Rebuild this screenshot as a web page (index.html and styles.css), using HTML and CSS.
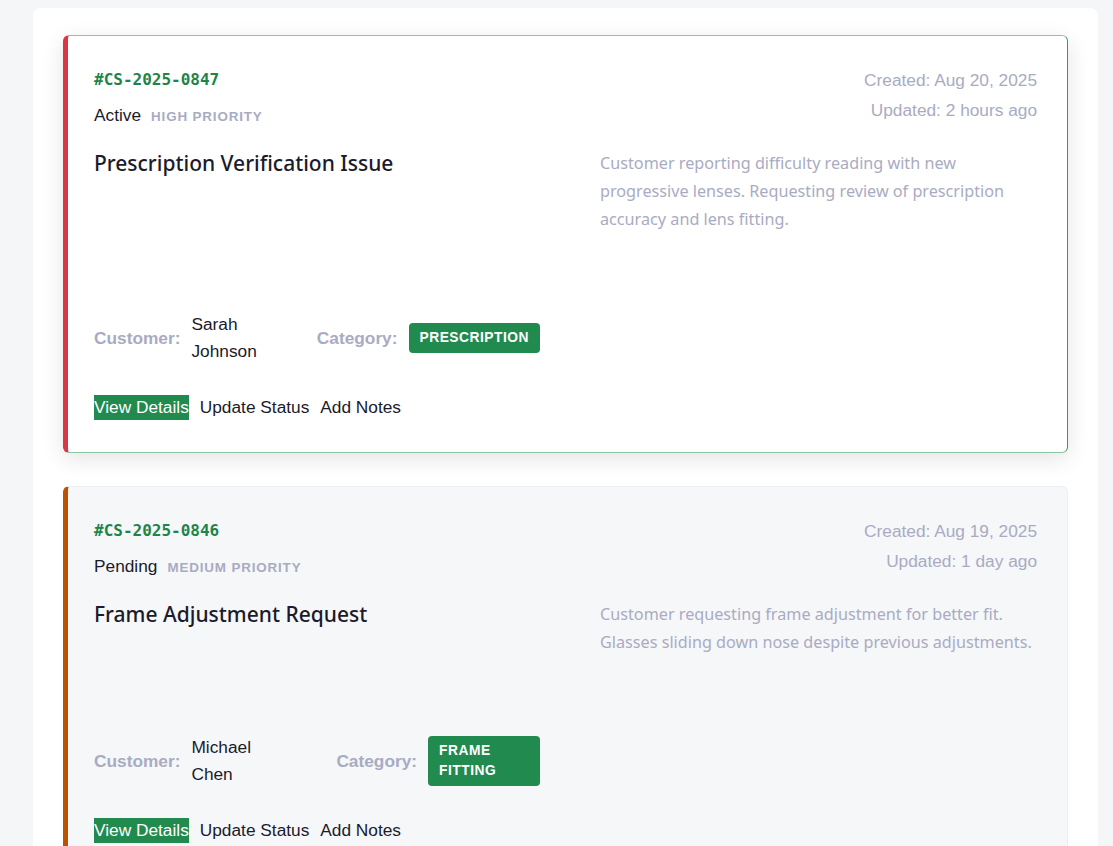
FILE: index.html
```html
<!DOCTYPE html>
<html lang="en">
<head>
<meta charset="utf-8">
<title>Cases</title>
<link rel="stylesheet" href="styles.css">
</head>
<body>
<div class="panel">
  <article class="case case-active">
    <header class="case-head">
      <div class="case-id-block">
        <div class="case-id">#CS-2025-0847</div>
        <div class="case-status"><span class="status">Active</span><span class="priority">High Priority</span></div>
      </div>
      <div class="case-dates">
        <div>Created: Aug 20, 2025</div>
        <div>Updated: 2 hours ago</div>
      </div>
    </header>
    <div class="case-body">
      <h2 class="case-title">Prescription Verification Issue</h2>
      <p class="case-desc">Customer reporting difficulty reading with new progressive lenses. Requesting review of prescription accuracy and lens fitting.</p>
    </div>
    <div class="case-meta">
      <div class="meta-item"><span class="meta-label">Customer:</span><span class="meta-value">Sarah Johnson</span></div>
      <div class="meta-item"><span class="meta-label">Category:</span><span class="badge">Prescription</span></div>
    </div>
    <div class="case-actions">
      <button class="btn btn-primary">View Details</button>
      <button class="btn">Update Status</button>
      <button class="btn">Add Notes</button>
    </div>
  </article>

  <article class="case case-pending">
    <header class="case-head">
      <div class="case-id-block">
        <div class="case-id">#CS-2025-0846</div>
        <div class="case-status"><span class="status">Pending</span><span class="priority">Medium Priority</span></div>
      </div>
      <div class="case-dates">
        <div>Created: Aug 19, 2025</div>
        <div>Updated: 1 day ago</div>
      </div>
    </header>
    <div class="case-body">
      <h2 class="case-title">Frame Adjustment Request</h2>
      <p class="case-desc">Customer requesting frame adjustment for better fit. Glasses sliding down nose despite previous adjustments.</p>
    </div>
    <div class="case-meta">
      <div class="meta-item"><span class="meta-label">Customer:</span><span class="meta-value">Michael Chen</span></div>
      <div class="meta-item"><span class="meta-label">Category:</span><span class="badge">Frame Fitting</span></div>
    </div>
    <div class="case-actions">
      <button class="btn btn-primary">View Details</button>
      <button class="btn">Update Status</button>
      <button class="btn">Add Notes</button>
    </div>
  </article>
</div>
</body>
</html>
```

FILE: styles.css
```css
html, body {
  margin: 0;
  padding: 0;
  background: #f5f6f8;
}
body {
  padding: 8px 15px 0 33px;
  font-family: "Liberation Sans", Arial, sans-serif;
  font-size: 17.3px;
  color: #1b1b2b;
}
.panel {
  background: #ffffff;
  border-radius: 8px;
  padding: 27px 30px 30px 30px;
}
.case {
  border: 1px solid #eceef1;
  border-left: 5px solid #bf5000;
  border-radius: 6px;
  padding: 30px 30px 30px 26px;
  margin-bottom: 33px;
  background: #f6f7f9;
}
.case-active {
  background: #ffffff;
  border-color: #8cc3a2;
  border-right-color: #3f9466;
  border-left-color: #dc3545;
  padding-bottom: 32px;
  box-shadow: 0 6px 22px rgba(0, 0, 0, 0.11);
}
.case-head {
  display: flex;
  justify-content: space-between;
  align-items: flex-start;
}
.case-id {
  font-family: "DejaVu Sans Mono", "Liberation Mono", monospace;
  font-weight: bold;
  font-size: 16px;
  line-height: 28px;
  color: #1e8449;
}
.case-status {
  display: flex;
  align-items: baseline;
  gap: 10px;
  margin-top: 7px;
  line-height: 28px;
}
.priority {
  font-size: 13.4px;
  font-weight: bold;
  text-transform: uppercase;
  letter-spacing: 0.85px;
  color: #a9abc2;
}
.case-dates {
  text-align: right;
  line-height: 30px;
  margin-top: -1px;
  color: #a9abc2;
}
.case-body {
  display: grid;
  grid-template-columns: 446px 1fr;
  column-gap: 60px;
  margin-top: 18px;
  margin-bottom: 78px;
}
.case-title {
  margin: 0;
  font-family: "Noto Sans", "Open Sans", sans-serif;
  font-size: 21px;
  font-weight: 500;
  line-height: 28px;
  color: #1b1b2b;
}
.case-desc {
  margin: 0;
  font-family: "Noto Sans", "Open Sans", sans-serif;
  font-size: 16.2px;
  line-height: 28px;
  color: #a9abc2;
}
.case-meta {
  display: flex;
  align-items: center;
  gap: 60px;
  width: 446px;
}
.meta-item {
  display: flex;
  align-items: center;
  gap: 11px;
}
.meta-label {
  font-weight: bold;
  color: #a9abc2;
  white-space: nowrap;
}
.meta-value {
  line-height: 27px;
}
.badge {
  display: inline-block;
  background: #218a4f;
  color: #ffffff;
  border-radius: 4px;
  padding: 5px 11px;
  font-size: 13.8px;
  line-height: 20px;
  font-weight: bold;
  text-transform: uppercase;
  letter-spacing: 0.5px;
}
.case-actions {
  display: flex;
  gap: 11px;
  margin-top: 30px;
}
.btn {
  font-family: "Liberation Sans", Arial, sans-serif;
  font-size: 17.3px;
  line-height: 25px;
  padding: 0;
  border: 0;
  background: transparent;
  color: #1b1b2b;
}
.btn-primary {
  background: #218a4f;
  color: #ffffff;
}
```
